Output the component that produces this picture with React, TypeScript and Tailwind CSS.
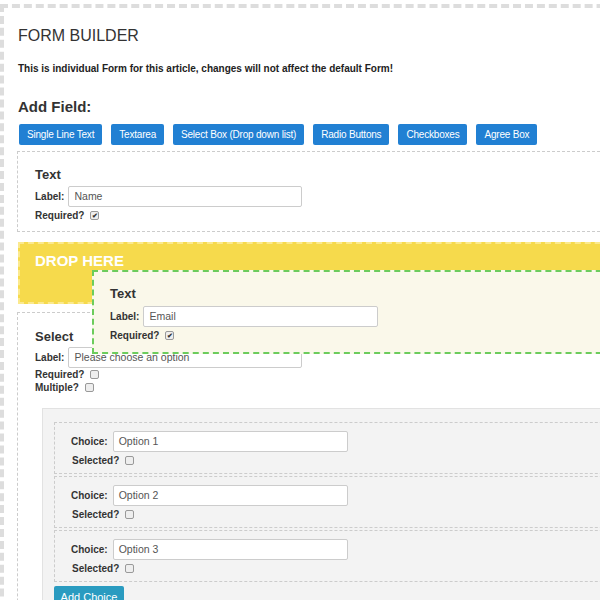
import React from "react";

const Cb = ({ checked }: { checked?: boolean }) => (
  <span className="inline-flex items-center justify-center w-[9px] h-[9px] border border-[#999] rounded-[2px] bg-[#eee] text-[7px] leading-none text-[#333] ml-[6px]">
    {checked ? "✔" : ""}
  </span>
);

const Input = ({ v, w }: { v: string; w: string }) => (
  <div className={`h-[21px] ${w} border border-[#ccc] rounded-[2px] bg-white text-[10.5px] font-normal text-[#555] px-[5px] flex items-center`}>{v}</div>
);

export default function App() {
  const btns = ["Single Line Text", "Textarea", "Select Box (Drop down list)", "Radio Buttons", "Checkboxes", "Agree Box"];
  return (
    <div className="w-[600px] h-[600px] overflow-hidden bg-white text-[#333] relative" style={{ fontFamily: "Arial, 'Liberation Sans', sans-serif" }}>
      <div className="absolute left-0 top-[4px] w-[700px] h-[700px] border-[4px] border-dashed border-[#ddd]" />
      <div className="relative pl-[18px] pt-[26px] w-[720px]">
        <div className="text-[16px] leading-[20px] text-[#333]">FORM BUILDER</div>
        <div className="mt-[15px] text-[10px] font-semibold text-[#222]">This is individual Form for this article, changes will not affect the default Form!</div>
        <div className="mt-[22px] text-[15px] font-bold text-[#333] leading-[18px]">Add Field:</div>
        <div className="mt-[8px] flex pl-[1px]">
          {btns.map((b, i) => (
            <div key={b} className={`h-[21px] px-[8px] flex items-center bg-[#2180d3] rounded-[2px] text-white text-[10px] tracking-[-0.2px] ${i ? "ml-[9px]" : ""}`}>{b}</div>
          ))}
        </div>
        <div className="mt-[6px] border border-dashed border-[#ccc] h-[81px] pl-[17px] pt-[15px] -ml-[1px]">
          <div className="text-[13px] font-bold leading-[16px]">Text</div>
          <div className="flex items-center mt-[3px] text-[10px] font-semibold"><span className="mr-[4px]">Label:</span><Input v="Name" w="w-[234px]" /></div>
          <div className="flex items-center mt-[1px] text-[10px] font-semibold">Required?<Cb checked /></div>
        </div>
        <div className="mt-[10px] h-[62px] bg-[#f6da4c] border-2 border-dashed border-[#fbe98e] pl-[15px] pt-[6px]">
          <div className="text-white font-bold text-[15px]">DROP HERE</div>
        </div>
        <div className="mt-[8px] border border-dashed border-[#ccc] h-[400px] pl-[17px] pt-[16px] -ml-[1px]">
          <div className="text-[13px] font-bold leading-[16px]">Select</div>
          <div className="flex items-center mt-[2px] text-[10px] font-semibold"><span className="mr-[4px]">Label:</span><Input v="Please choose an option" w="w-[234px]" /></div>
          <div className="flex items-center text-[10px] font-semibold leading-[13px]">Required?<Cb /></div>
          <div className="flex items-center text-[10px] font-semibold leading-[13px]">Multiple?<Cb /></div>
          <div className="mt-[14px] ml-[7px] bg-[#f3f3f3] border border-[#e2e2e2] pl-[11px] pt-[13px] h-[300px]">
            {["Option 1", "Option 2", "Option 3"].map((o, i) => (
              <div key={o} className={`border border-dashed border-[#ccc] h-[52px] pl-[16px] pt-[8px] ${i ? "mt-[2px]" : ""}`}>
                <div className="flex items-center text-[10px] font-semibold"><span className="mr-[5px]">Choice:</span><Input v={o} w="w-[235px]" /></div>
                <div className="flex items-center mt-[1px] ml-[1px] text-[10px] font-semibold">Selected?<Cb /></div>
              </div>
            ))}
            <div className="mt-[4px] w-[70px] h-[22px] bg-[#2a9bc0] rounded-[2px] text-white text-[11px] flex items-center justify-center">Add Choice</div>
          </div>
        </div>
      </div>
      <div className="absolute left-[92px] top-[270px] w-[540px] h-[84px] bg-[#faf8ea] border-2 border-dashed border-[#6ccc5c] pl-[16px] pt-[14px]">
        <div className="text-[13px] font-bold leading-[16px]">Text</div>
        <div className="flex items-center mt-[4px] text-[10px] font-semibold"><span className="mr-[4px]">Label:</span><Input v="Email" w="w-[235px]" /></div>
        <div className="flex items-center mt-[1px] text-[10px] font-semibold">Required?<Cb checked /></div>
      </div>
    </div>
  );
}
